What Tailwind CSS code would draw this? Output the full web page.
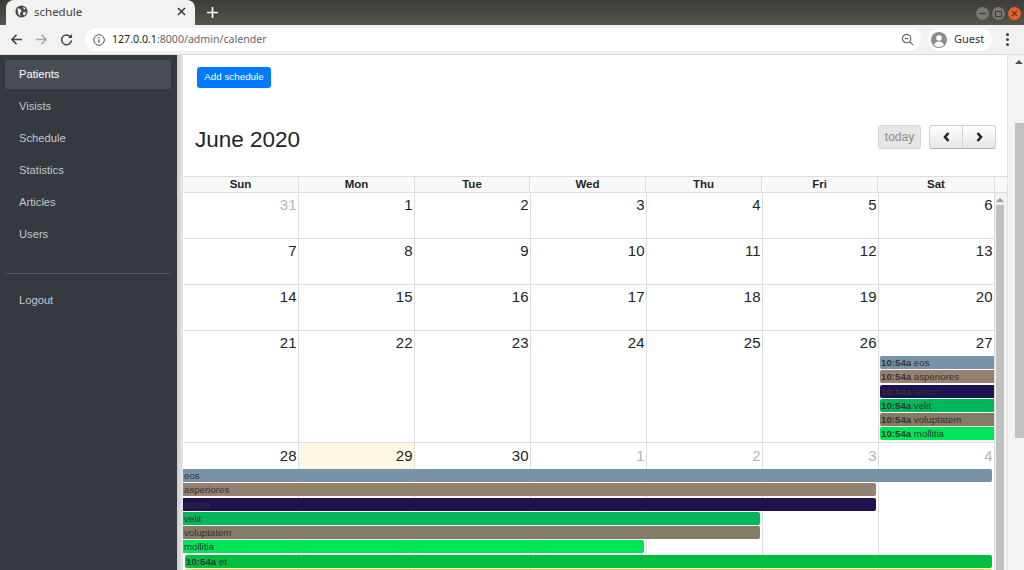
<!doctype html>
<html>
<head>
  <meta charset="UTF-8">
  <script src="https://cdn.jsdelivr.net/npm/@tailwindcss/browser@4"></script>
</head>
<body class="h-[570px] overflow-hidden bg-white font-['Liberation_Sans',sans-serif]">
  <!-- browser chrome -->
  <div class="h-[25px] flex items-end bg-gradient-to-b from-[#3c3b37] to-[#57544c]">
    <div class="w-[189px] h-[25px] ml-[6px] bg-[#f2f2f2] rounded-t-lg flex items-center pl-[9px] pr-[9px] pb-[2px] font-['Noto_Sans',sans-serif] text-[11.5px] text-[#444]">
      <svg class="w-[13px] h-[13px] mr-[6px]" viewBox="0 0 16 16"><circle cx="8" cy="8" r="7.5" fill="#4a4a4a"/><path d="M3 4l4 1 1 3-2 2 1 4-3-3zM10 2l3 2-2 2zM10 9l4 0-2 4-2-1z" fill="#f2f2f2"/></svg>
      <span class="flex-1">schedule</span>
      <svg class="w-[9px] h-[9px]" viewBox="0 0 10 10"><path d="M1 1l8 8M9 1l-8 8" stroke="#333" stroke-width="1.6"/></svg>
    </div>
    <svg class="w-[13px] h-[13px] ml-[11px] mb-[6px]" viewBox="0 0 12 12"><path d="M6 1v10M1 6h10" stroke="#fff" stroke-width="1.5"/></svg>
    <div class="ml-auto flex gap-[3px] mr-[3px] mb-[5px]">
      <div class="w-[13px] h-[13px] rounded-full bg-[#77766f] flex items-center justify-center"><div class="w-[7px] h-[1px] bg-[#3c3b37]"></div></div>
      <div class="w-[13px] h-[13px] rounded-full bg-[#77766f] flex items-center justify-center"><div class="w-[7px] h-[6px] border border-[#3c3b37]"></div></div>
      <div class="w-[13px] h-[13px] rounded-full bg-[#e9602c] flex items-center justify-center"><svg class="w-[7px] h-[7px]" viewBox="0 0 8 8"><path d="M1 1l6 6M7 1l-6 6" stroke="#5a2a14" stroke-width="1.2"/></svg></div>
    </div>
  </div>
  <div class="h-[30px] bg-[#f2f2f2] border-b border-[#dcdcdc] flex items-center">
    <svg class="w-[13px] h-[13px] ml-[10px]" viewBox="0 0 14 14" fill="none" stroke="#444" stroke-width="1.6"><path d="M13 7H2M7 2L2 7l5 5"/></svg>
    <svg class="w-[13px] h-[13px] ml-[12px]" viewBox="0 0 14 14" fill="none" stroke="#aaa" stroke-width="1.6"><path d="M1 7h11M7 2l5 5-5 5"/></svg>
    <svg class="w-[13px] h-[13px] ml-[12px]" viewBox="0 0 14 14" fill="none" stroke="#444" stroke-width="1.6"><path d="M11.5 4.5A5.3 5.3 0 1 0 12.3 8"/><path d="M13 1v4.5H8.500z" fill="#444" stroke="none"/></svg>
    <div class="ml-[12px] w-[836px] h-[23px] bg-white rounded-full flex items-center pl-[8px] text-[10.6px] text-[#666] font-['Noto_Sans',sans-serif]">
      <svg class="w-[12px] h-[12px] mr-[7px] shrink-0" viewBox="0 0 12 12" fill="none" stroke="#555"><circle cx="6" cy="6" r="5.300"/><path d="M6 5.200v3.600M6 3v1.200" stroke-width="1.200"/></svg>
      <span class="text-[#222]">127.0.0.1</span><span>:8000/admin/calender</span>
      <svg class="w-[13px] h-[13px] ml-auto mr-[7px]" viewBox="0 0 14 14" fill="none" stroke="#666" stroke-width="1.300"><circle cx="6" cy="6" r="4.500"/><path d="M4 6h4M9.500 9.500l3.500 3.500"/></svg>
    </div>
    <div class="ml-[7px] w-[64px] h-[23px] bg-white rounded-full flex items-center pl-[3px] text-[11px] text-[#333] font-['Noto_Sans',sans-serif]">
      <svg class="w-[16px] h-[16px] mr-[7px]" viewBox="0 0 16 16"><circle cx="8" cy="8" r="8" fill="#8b8b8b"/><circle cx="8" cy="6" r="2.800" fill="#fff"/><path d="M3 13c1-3 3-3.500 5-3.500s4 .5 5 3.500a7 7 0 0 1-10 0" fill="#fff"/></svg>
      Guest
    </div>
    <div class="ml-[14px] flex flex-col gap-[2px]">
      <div class="w-[3px] h-[3px] rounded-full bg-[#444]"></div>
      <div class="w-[3px] h-[3px] rounded-full bg-[#444]"></div>
      <div class="w-[3px] h-[3px] rounded-full bg-[#444]"></div>
    </div>
  </div>

  <div class="flex h-[515px] overflow-hidden">
    <!-- sidebar -->
    <div class="w-[177px] shrink-0 bg-[#343a40] pl-[5px] pr-[6px] py-[5px] text-[11.2px] text-[#c2c7d0]">
      <ul>
        <li class="h-[29px] mb-[3px] px-[14px] flex items-center bg-white/10 rounded-[2px] text-white">Patients</li>
        <li class="h-[29px] mb-[3px] px-[14px] flex items-center">Visists</li>
        <li class="h-[29px] mb-[3px] px-[14px] flex items-center">Schedule</li>
        <li class="h-[29px] mb-[3px] px-[14px] flex items-center">Statistics</li>
        <li class="h-[29px] mb-[3px] px-[14px] flex items-center">Articles</li>
        <li class="h-[29px] mb-[3px] px-[14px] flex items-center">Users</li>
      </ul>
      <div class="mt-[24px] border-t border-[#4f5962] pt-[12px]">
        <div class="h-[29px] px-[14px] flex items-center">Logout</div>
      </div>
    </div>
    <div class="w-[6px] shrink-0 bg-gradient-to-r from-[#cbcdcf] to-[#e9e9e9]"></div>

    <!-- page content -->
    <div class="w-[824px] shrink-0 bg-white">
      <div class="h-[68px] pl-[14px] pt-[12px]">
        <button class="block h-[21px] w-[74px] rounded-[3px] bg-[#007bff] text-white text-[9.8px]">Add schedule</button>
      </div>
      <div class="h-[53px] flex items-start">
        <h2 class="ml-[12px] mt-[2px] text-[22.5px] leading-[30px] text-[#212529]">June 2020</h2>
        <button class="block ml-auto mt-[2px] h-[24px] w-[43px] rounded-[3px] border border-[#d5d5d5] bg-[#e6e6e6] text-[#8c8c8c] text-[12px]">today</button>
        <div class="ml-[8px] mr-[11px] mt-[2px] h-[24px] w-[67px] flex rounded-[3px] border border-[#d0d0d0] border-b-[#b3b3b3] bg-gradient-to-b from-white to-[#e6e6e6]">
          <div class="flex-1 flex items-center justify-center border-r border-[#d5d5d5]"><svg class="w-[7px] h-[10px]" viewBox="0 0 7 10" fill="none" stroke="#222" stroke-width="2.600"><path d="M5.500 1L2 5l3.500 4"/></svg></div>
          <div class="flex-1 flex items-center justify-center"><svg class="w-[7px] h-[10px]" viewBox="0 0 7 10" fill="none" stroke="#222" stroke-width="2.600"><path d="M1.500 1L5 5 1.500 9"/></svg></div>
        </div>
      </div>

      <!-- day names -->
      <div class="flex border-y border-[#ddd] h-[17px] bg-[#f8f8f8] text-[11.500px] font-bold text-[#212529] leading-[15px] text-center">
        <div class="w-[812px] grid grid-cols-[116px_116px_115px_116px_116px_116px_117px]">
          <div class="border-r border-[#ddd]">Sun</div>
          <div class="border-r border-[#ddd]">Mon</div>
          <div class="border-r border-[#ddd]">Tue</div>
          <div class="border-r border-[#ddd]">Wed</div>
          <div class="border-r border-[#ddd]">Thu</div>
          <div class="border-r border-[#ddd]">Fri</div>
          <div class="border-r border-[#ddd]">Sat</div>
        </div>
      </div>

      <div class="flex">
        <div class="w-[812px] text-[15px] text-[#212529] leading-[18px] text-right">
          <div class="h-[46px] border-b border-[#ddd] grid grid-cols-7">
            <div class="border-r border-[#ddd] pr-[1.5px] pt-[3px] text-[#b5b5b5]">31</div>
            <div class="border-r border-[#ddd] pr-[1.5px] pt-[3px]">1</div>
            <div class="border-r border-[#ddd] pr-[1.5px] pt-[3px]">2</div>
            <div class="border-r border-[#ddd] pr-[1.5px] pt-[3px]">3</div>
            <div class="border-r border-[#ddd] pr-[1.5px] pt-[3px]">4</div>
            <div class="border-r border-[#ddd] pr-[1.5px] pt-[3px]">5</div>
            <div class="border-r border-[#ddd] pr-[1.5px] pt-[3px]">6</div>
          </div>
          <div class="h-[46px] border-b border-[#ddd] grid grid-cols-7">
            <div class="border-r border-[#ddd] pr-[1.5px] pt-[3px]">7</div>
            <div class="border-r border-[#ddd] pr-[1.5px] pt-[3px]">8</div>
            <div class="border-r border-[#ddd] pr-[1.5px] pt-[3px]">9</div>
            <div class="border-r border-[#ddd] pr-[1.5px] pt-[3px]">10</div>
            <div class="border-r border-[#ddd] pr-[1.5px] pt-[3px]">11</div>
            <div class="border-r border-[#ddd] pr-[1.5px] pt-[3px]">12</div>
            <div class="border-r border-[#ddd] pr-[1.5px] pt-[3px]">13</div>
          </div>
          <div class="h-[46px] border-b border-[#ddd] grid grid-cols-7">
            <div class="border-r border-[#ddd] pr-[1.5px] pt-[3px]">14</div>
            <div class="border-r border-[#ddd] pr-[1.5px] pt-[3px]">15</div>
            <div class="border-r border-[#ddd] pr-[1.5px] pt-[3px]">16</div>
            <div class="border-r border-[#ddd] pr-[1.5px] pt-[3px]">17</div>
            <div class="border-r border-[#ddd] pr-[1.5px] pt-[3px]">18</div>
            <div class="border-r border-[#ddd] pr-[1.5px] pt-[3px]">19</div>
            <div class="border-r border-[#ddd] pr-[1.5px] pt-[3px]">20</div>
          </div>
          <div class="h-[112px] border-b border-[#ddd] grid grid-cols-7">
            <div class="border-r border-[#ddd] pr-[1.5px] pt-[3px]">21</div>
            <div class="border-r border-[#ddd] pr-[1.5px] pt-[3px]">22</div>
            <div class="border-r border-[#ddd] pr-[1.5px] pt-[3px]">23</div>
            <div class="border-r border-[#ddd] pr-[1.5px] pt-[3px]">24</div>
            <div class="border-r border-[#ddd] pr-[1.5px] pt-[3px]">25</div>
            <div class="border-r border-[#ddd] pr-[1.5px] pt-[3px]">26</div>
            <div class="border-r border-[#ddd] pt-[3px]">
              <div class="pr-[1.5px]">27</div>
              <div class="mt-[4px] ml-[1px] flex flex-col gap-[1.3px] text-left text-[9.7px] leading-[13px] text-[#333]">
                <div class="h-[13px] pl-[1px] bg-[#7893a6] rounded-l-[2px] whitespace-nowrap overflow-hidden"><b>10:54a</b> eos</div>
                <div class="h-[13px] pl-[1px] bg-[#968070] rounded-l-[2px] whitespace-nowrap overflow-hidden"><b>10:54a</b> asperiores</div>
                <div class="h-[13px] pl-[1px] bg-[#1f114d] rounded-l-[2px] whitespace-nowrap overflow-hidden"><b>10:54a</b> rerum</div>
                <div class="h-[13px] pl-[1px] bg-[#00b85c] rounded-l-[2px] whitespace-nowrap overflow-hidden"><b>10:54a</b> velit</div>
                <div class="h-[13px] pl-[1px] bg-[#837b65] rounded-l-[2px] whitespace-nowrap overflow-hidden"><b>10:54a</b> voluptatem</div>
                <div class="h-[13px] pl-[1px] bg-[#00e556] rounded-l-[2px] whitespace-nowrap overflow-hidden"><b>10:54a</b> mollitia</div>
              </div>
            </div>
          </div>

          <!-- last week: day cells span all rows, bars sit on top -->
          <div class="h-[130px] overflow-hidden grid grid-cols-7 grid-rows-[26px_repeat(8,14.300px)] text-left text-[9.7px] leading-[13px] text-[#333]">
            <div class="col-start-1 row-start-1 row-span-full border-r border-[#ddd] pr-[1.5px] pt-[4px] text-right text-[15px] leading-[18px] text-[#212529]">28</div>
            <div class="col-start-2 row-start-1 row-span-full border-r border-[#ddd]"><div class="h-[26px] bg-[#fcf8e3] pr-[1.5px] pt-[4px] text-right text-[15px] leading-[18px] text-[#212529]">29</div></div>
            <div class="col-start-3 row-start-1 row-span-full border-r border-[#ddd] pr-[1.5px] pt-[4px] text-right text-[15px] leading-[18px] text-[#212529]">30</div>
            <div class="col-start-4 row-start-1 row-span-full border-r border-[#ddd] pr-[1.5px] pt-[4px] text-right text-[15px] leading-[18px] text-[#b5b5b5]">1</div>
            <div class="col-start-5 row-start-1 row-span-full border-r border-[#ddd] pr-[1.5px] pt-[4px] text-right text-[15px] leading-[18px] text-[#b5b5b5]">2</div>
            <div class="col-start-6 row-start-1 row-span-full border-r border-[#ddd] pr-[1.5px] pt-[4px] text-right text-[15px] leading-[18px] text-[#b5b5b5]">3</div>
            <div class="col-start-7 row-start-1 row-span-full border-r border-[#ddd] pr-[1.5px] pt-[4px] text-right text-[15px] leading-[18px] text-[#b5b5b5]">4</div>

            <div class="z-10 col-start-1 col-span-7 row-start-2 h-[13px] mr-[3px] pl-[1px] bg-[#7893a6] rounded-r-[2px]">eos</div>
            <div class="z-10 col-start-1 col-span-6 row-start-3 h-[13px] mr-[3px] pl-[1px] bg-[#968070] rounded-r-[2px]">asperiores</div>
            <div class="z-10 col-start-1 col-span-6 row-start-4 h-[13px] mr-[3px] pl-[1px] bg-[#1f114d] rounded-r-[2px]">rerum</div>
            <div class="z-10 col-start-1 col-span-5 row-start-5 h-[13px] mr-[3px] pl-[1px] bg-[#00b85c] rounded-r-[2px]">velit</div>
            <div class="z-10 col-start-1 col-span-5 row-start-6 h-[13px] mr-[3px] pl-[1px] bg-[#837b65] rounded-r-[2px]">voluptatem</div>
            <div class="z-10 col-start-1 col-span-4 row-start-7 h-[13px] mr-[3px] pl-[1px] bg-[#00e556] rounded-r-[2px]">mollitia</div>
            <div class="z-10 col-start-1 col-span-7 row-start-8 h-[13px] ml-[2px] mr-[3px] pl-[1px] bg-[#00bf3f] rounded-[2px]"><b>10:54a</b> et</div>
            <div class="z-10 col-start-1 col-span-7 row-start-9 h-[13px] ml-[2px] mr-[3px] bg-[#b9ea2c] rounded-[2px]"></div>
          </div>
        </div>
        <!-- inner scrollbar -->
        <div class="w-[12px] h-[377px] bg-[#f1f1f1] flex flex-col items-start pl-[1px]">
          <svg class="w-[8px] h-[4px] mt-[5px]" viewBox="0 0 8 4"><path d="M4 0l4 4H0z" fill="#9a9a9a"/></svg>
          <div class="w-[8px] flex-1 mt-[3px] bg-[#c1c1c1]"></div>
        </div>
      </div>
    </div>

    <!-- page scrollbar -->
    <div class="w-[17px] shrink-0 bg-[#f4f4f4] border-l border-[#e2e2e2] flex flex-col items-end">
      <svg class="w-[8px] h-[4px] mt-[5px] mr-[1px]" viewBox="0 0 8 4"><path d="M4 0l4 4H0z" fill="#505050"/></svg>
      <div class="w-[9px] h-[315px] mt-[59px] bg-[#c1c1c1]"></div>
    </div>
  </div>
</body>
</html>
